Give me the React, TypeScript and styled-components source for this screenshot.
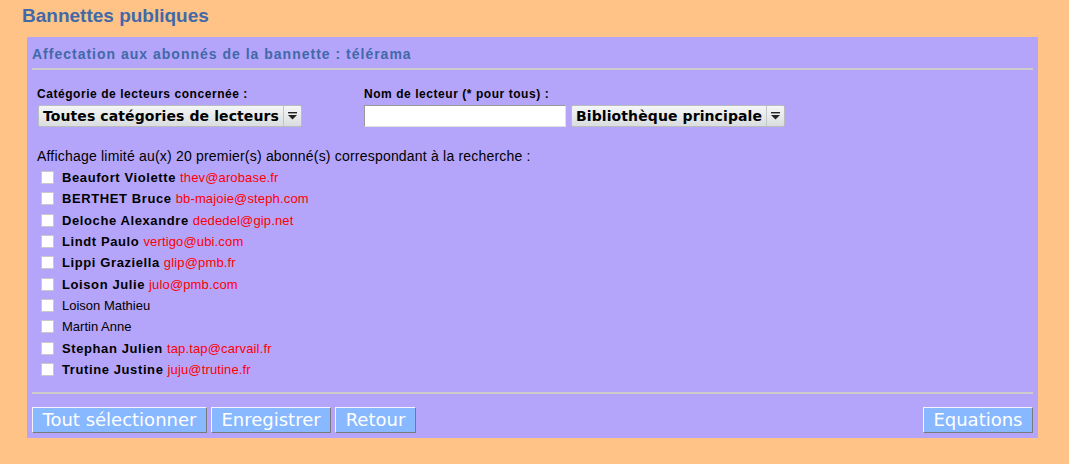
import React from "react";
import styled, { createGlobalStyle } from "styled-components";

const Global = createGlobalStyle`
  html, body { margin: 0; padding: 0; }
  body {
    background: #ffc387;
    font-family: "Liberation Sans", Arial, sans-serif;
    width: 1069px;
    height: 464px;
    overflow: hidden;
  }
`;

const Page = styled.div`
  padding: 5px 0 0 0;
`;

const Title = styled.h1`
  margin: 0 0 0 22px;
  font-family: "Liberation Sans", Arial, sans-serif;
  font-size: 19px;
  font-weight: bold;
  line-height: 22px;
  color: #4169a8;
`;

const Panel = styled.div`
  margin: 10px 0 0 27px;
  width: 1011px;
  background: #b4a5fb;
  padding: 8px 5px 5px 5px;
  box-sizing: border-box;
`;

const PanelHeader = styled.h2`
  margin: 0;
  font-size: 14px;
  font-weight: bold;
  letter-spacing: 1px;
  line-height: 18px;
  color: #4169a8;
`;

const Rule = styled.div<{ $top: number }>`
  height: 2px;
  background: #cccccc;
  margin: ${(p) => p.$top}px 0 0 0;
`;

const FormRow = styled.div`
  display: flex;
  margin: 17px 0 0 5px;
`;

const Field = styled.div<{ $width?: number }>`
  display: flex;
  flex-direction: column;
  width: ${(p) => (p.$width ? `${p.$width}px` : "auto")};
`;

const Label = styled.label`
  font-size: 12px;
  font-weight: bold;
  line-height: 15px;
  letter-spacing: 0.55px;
  color: #000;
  height: 15px;
  margin-bottom: 3px;
  white-space: nowrap;
`;

const Controls = styled.div`
  display: flex;
  gap: 5px;
  align-items: center;
`;

const Select = styled.div<{ $offset?: number }>`
  display: flex;
  align-items: stretch;
  height: 22px;
  box-sizing: border-box;
  margin-left: ${(p) => p.$offset ?? 0}px;
  border: 1px solid #b9bcc0;
  border-radius: 2px;
  background: linear-gradient(#f5f6f6, #dadddf);
  font-family: "DejaVu Sans", sans-serif;
  font-weight: bold;
  font-size: 14px;
  color: #000;
`;

const SelectText = styled.span`
  padding: 0 4px 0 4px;
  line-height: 20px;
  white-space: nowrap;
  letter-spacing: 0.1px;
`;

const SelectArrow = styled.span`
  width: 17px;
  border-left: 1px solid #c3c6c9;
  display: flex;
  align-items: center;
  justify-content: center;
`;

const TextInput = styled.input`
  width: 202px;
  height: 22px;
  box-sizing: border-box;
  border: 1px solid #9a9a9a;
  border-right-color: #e0e0e0;
  border-bottom-color: #e0e0e0;
  background: #fff;
  margin: 0;
  padding: 0 2px;
  font-size: 13px;
`;

const Info = styled.div`
  margin: 21px 0 0 5px;
  font-size: 14px;
  letter-spacing: 0.2px;
  line-height: 17px;
  color: #000;
`;

const List = styled.div`
  margin: 2px 0 0 9px;
  display: flex;
  flex-direction: column;
`;

const Row = styled.div`
  display: flex;
  align-items: center;
  height: 21.3px;
`;

const Box = styled.span`
  width: 11px;
  height: 11px;
  background: #fff;
  border: 1px solid #c9c9c9;
  margin-right: 8px;
  flex: none;
`;

const Name = styled.span<{ $bold: boolean }>`
  font-size: 13px;
  font-weight: ${(p) => (p.$bold ? "bold" : "normal")};
  letter-spacing: ${(p) => (p.$bold ? "0.6px" : "0")};
  color: #000;
  white-space: nowrap;
`;

const Email = styled.span`
  font-size: 13px;
  letter-spacing: 0.15px;
  color: #ff0000;
  margin-left: 4px;
  white-space: nowrap;
`;

const ButtonBar = styled.div`
  display: flex;
  margin-top: 13px;
  gap: 4px;
`;

const Spacer = styled.div`
  flex: 1;
`;

const Button = styled.button`
  height: 26px;
  box-sizing: border-box;
  padding: 0 9.5px;
  background: #88b8ff;
  color: #fff;
  font-family: "DejaVu Sans", sans-serif;
  font-size: 18px;
  line-height: 22px;
  border: 1px solid;
  border-color: #f4f4ff #7a7a7a #7a7a7a #f4f4ff;
  border-radius: 0;
  margin: 0;
  cursor: pointer;
`;

const Arrow = () => (
  <svg width="11" height="8" viewBox="0 0 11 8">
    <rect x="1" y="0" width="9" height="1.4" fill="#222" />
    <path d="M1 3 H10 L5.5 7.5 Z" fill="#222" />
  </svg>
);

type Sub = { name: string; email?: string; bold: boolean };

const subscribers: Sub[] = [
  { name: "Beaufort Violette", email: "thev@arobase.fr", bold: true },
  { name: "BERTHET Bruce", email: "bb-majoie@steph.com", bold: true },
  { name: "Deloche Alexandre", email: "dededel@gip.net", bold: true },
  { name: "Lindt Paulo", email: "vertigo@ubi.com", bold: true },
  { name: "Lippi Graziella", email: "glip@pmb.fr", bold: true },
  { name: "Loison Julie", email: "julo@pmb.com", bold: true },
  { name: "Loison Mathieu", bold: false },
  { name: "Martin Anne", bold: false },
  { name: "Stephan Julien", email: "tap.tap@carvail.fr", bold: true },
  { name: "Trutine Justine", email: "juju@trutine.fr", bold: true },
];

export default function App() {
  return (
    <>
      <Global />
      <Page>
        <Title>Bannettes publiques</Title>
        <Panel>
          <PanelHeader>Affectation aux abonnés de la bannette : télérama</PanelHeader>
          <Rule $top={5} />
          <FormRow>
            <Field $width={327}>
              <Label>Catégorie de lecteurs concernée :</Label>
              <Controls>
                <Select $offset={1}>
                  <SelectText>Toutes catégories de lecteurs</SelectText>
                  <SelectArrow>
                    <Arrow />
                  </SelectArrow>
                </Select>
              </Controls>
            </Field>
            <Field>
              <Label>Nom de lecteur (* pour tous) :</Label>
              <Controls>
                <TextInput type="text" />
                <Select>
                  <SelectText>Bibliothèque principale</SelectText>
                  <SelectArrow>
                    <Arrow />
                  </SelectArrow>
                </Select>
              </Controls>
            </Field>
          </FormRow>
          <Info>Affichage limité au(x) 20 premier(s) abonné(s) correspondant à la recherche :</Info>
          <List>
            {subscribers.map((s) => (
              <Row key={s.name}>
                <Box />
                <Name $bold={s.bold}>{s.name}</Name>
                {s.email && <Email>{s.email}</Email>}
              </Row>
            ))}
          </List>
          <Rule $top={12} />
          <ButtonBar>
            <Button>Tout sélectionner</Button>
            <Button>Enregistrer</Button>
            <Button>Retour</Button>
            <Spacer />
            <Button>Equations</Button>
          </ButtonBar>
        </Panel>
      </Page>
    </>
  );
}
